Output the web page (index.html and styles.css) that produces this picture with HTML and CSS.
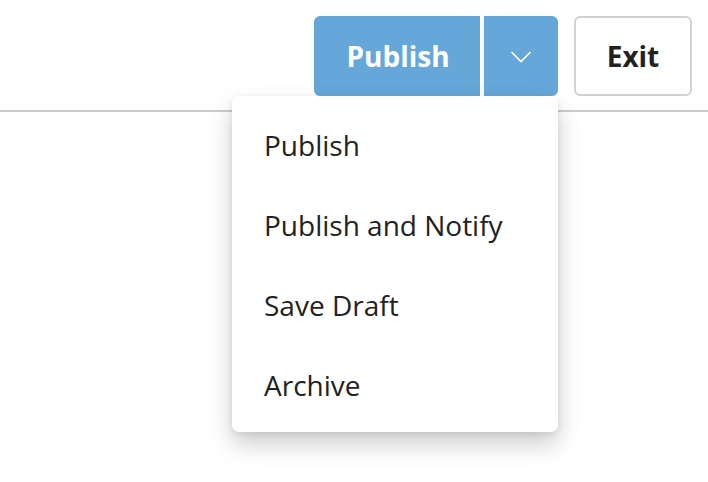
FILE: index.html
```html
<!DOCTYPE html>
<html>
<head>
<meta charset="utf-8">
<link rel="stylesheet" href="styles.css">
</head>
<body>
<div class="page">
  <header class="toolbar">
    <div class="split">
      <button class="btn btn-primary btn-main">Publish</button>
      <button class="btn btn-primary btn-toggle" aria-label="More options">
        <svg width="22" height="14" viewBox="0 0 22 14"><path d="M1.5 2 L11 11.5 L20.5 2" fill="none" stroke="#fff" stroke-width="1.6"/></svg>
      </button>
      <ul class="menu">
        <li class="menu-item">Publish</li>
        <li class="menu-item">Publish and Notify</li>
        <li class="menu-item">Save Draft</li>
        <li class="menu-item">Archive</li>
      </ul>
    </div>
    <button class="btn btn-secondary">Exit</button>
  </header>
</div>
</body>
</html>
```
FILE: styles.css
```css
html, body {
  margin: 0;
  background: #fff;
  font-family: "Open Sans", "Noto Sans", "Liberation Sans", sans-serif;
  color: #222;
}
.page {
  min-height: 482px;
}
.toolbar {
  display: flex;
  justify-content: flex-end;
  align-items: center;
  gap: 16px;
  padding: 16px 16px 14px;
  border-bottom: 2px solid #cccccc;
}
.split {
  position: relative;
  display: flex;
  gap: 4px;
}
.btn {
  box-sizing: border-box;
  height: 80px;
  font-family: inherit;
  font-size: 28px;
  font-weight: 700;
  border: none;
  border-radius: 6px;
  padding: 0;
  cursor: pointer;
  display: flex;
  align-items: center;
  justify-content: center;
}
.btn-primary {
  background: #65a7d9;
  color: #fff;
}
.btn-main {
  width: 166px;
  border-radius: 6px 0 0 6px;
  padding-left: 2px;
}
.btn-toggle {
  width: 74px;
  border-radius: 0 6px 6px 0;
  padding-top: 2px;
}
.btn-secondary {
  width: 118px;
  background: #fff;
  color: #222;
  border: 2px solid #d2d2d2;
}
.menu {
  position: absolute;
  top: 80px;
  right: 0;
  width: 326px;
  margin: 0;
  padding: 9px 0 7px;
  list-style: none;
  background: #fff;
  border-radius: 7px;
  box-shadow: 0 12px 24px rgba(0, 0, 0, 0.2), 0 2px 6px rgba(0, 0, 0, 0.08);
  z-index: 10;
}
.menu-item {
  height: 80px;
  line-height: 80px;
  padding-left: 32px;
  font-size: 28px;
  font-weight: 400;
  color: #222;
}
```
